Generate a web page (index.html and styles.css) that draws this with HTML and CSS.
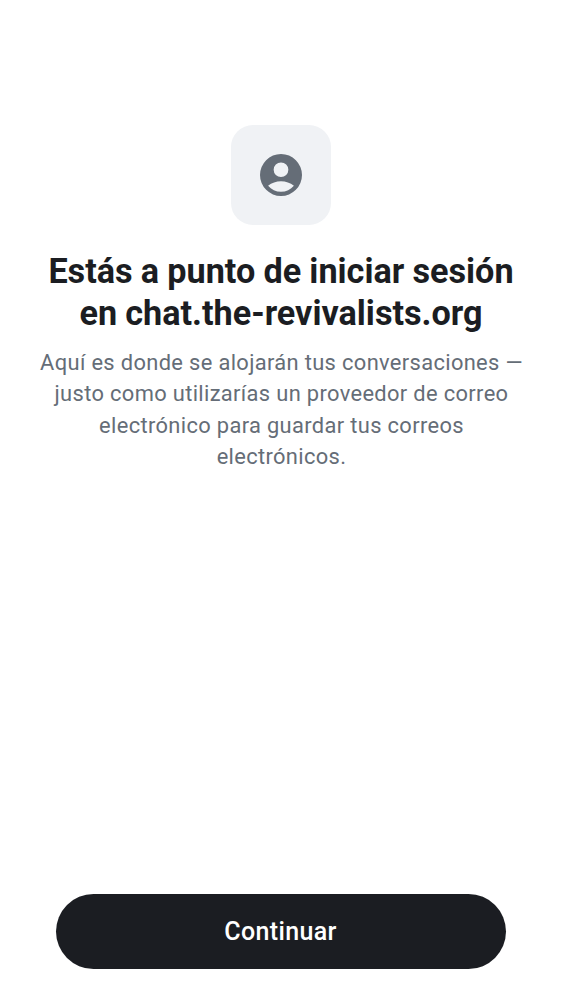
FILE: index.html
```html
<!DOCTYPE html>
<html lang="es">
<head>
<meta charset="utf-8">
<title>Iniciar sesión</title>
<link rel="stylesheet" href="styles.css">
</head>
<body>
<main class="screen">
  <section class="intro">
    <div class="icon-tile">
      <svg class="icon" viewBox="2 2 20 20" aria-hidden="true"><path fill-rule="evenodd" d="M12 2a10 10 0 1 0 0 20 10 10 0 0 0 0-20zM12 6a3.500 3.500 0 1 1 0 7 3.500 3.500 0 0 1 0-7zM5.850 17.100C7.600 15.750 9.700 15 12 15s4.400.750 6.150 2.100C16.600 18.950 14.400 20 12 20s-4.600-1.050-6.150-2.900z"/></svg>
    </div>
    <h1 class="title">Estás a punto de iniciar sesión<br>en chat.the-revivalists.org</h1>
    <p class="message">Aquí es donde se alojarán tus conversaciones —<br>justo como utilizarías un proveedor de correo<br>electrónico para guardar tus correos<br>electrónicos.</p>
  </section>
  <button class="continue" type="button">Continuar</button>
</main>
</body>
</html>
```
FILE: styles.css
```css
body {
  margin: 0;
  background: #fff;
  font-family: Roboto, sans-serif;
}

.screen {
  box-sizing: border-box;
  height: 1000px;
  padding: 125px 0 31px;
  display: flex;
  flex-direction: column;
  align-items: center;
  justify-content: space-between;
}

.intro {
  display: flex;
  flex-direction: column;
  align-items: center;
  text-align: center;
  white-space: nowrap;
}

.icon-tile {
  width: 100px;
  height: 100px;
  border-radius: 22px;
  background: #f0f2f5;
  display: grid;
  place-items: center;
}

.icon {
  width: 42px;
  height: 42px;
  fill: #656d77;
}

.title {
  margin: 25px 0 0;
  font-size: 34.200px;
  line-height: 42px;
  font-weight: 700;
  word-spacing: -0.3px;
  color: #1b1d22;
}

.message {
  margin: 13.200px 0 0;
  padding-left: 1px;
  font-size: 21.875px;
  line-height: 31.250px;
  letter-spacing: 0.35px;
  color: #656d77;
}

.continue {
  width: 450px;
  height: 75px;
  padding: 0 1px 0 0;
  border: 0;
  border-radius: 38px;
  background: #1b1d22;
  color: #fff;
  font: 500 25px/37px Roboto, sans-serif;
  letter-spacing: 0.350px;
}
```
